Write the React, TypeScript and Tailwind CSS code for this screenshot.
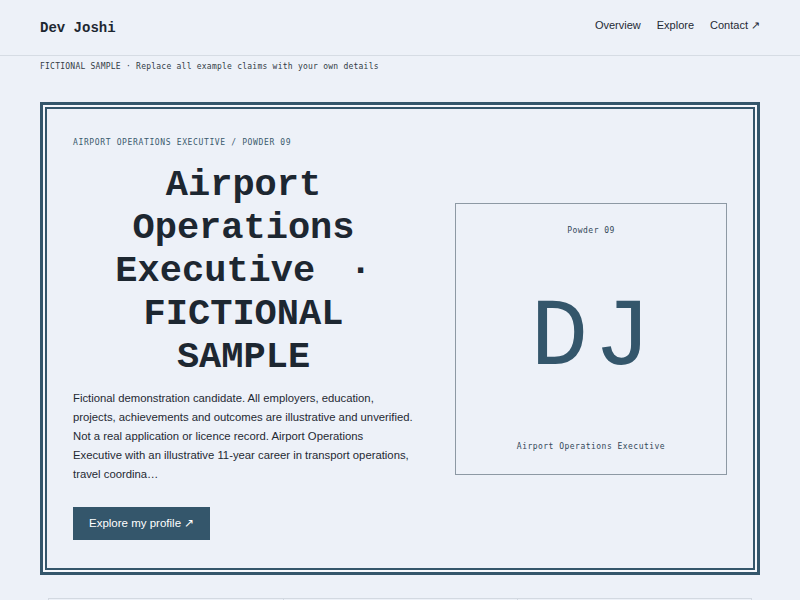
import React from 'react';

const mono = { fontFamily: '"DejaVu Sans Mono", "Liberation Mono", monospace' };
const courier = { fontFamily: '"Courier New", "Liberation Mono", monospace' };
const sans = { fontFamily: '"Liberation Sans", Arial, sans-serif' };

const NAV = ['Overview', 'Explore', 'Contact ↗'];

function Header() {
  return (
    <header className="h-[56px] border-b border-[#d6dce4] px-10 flex items-center justify-between">
      <div className="text-[14px] font-bold text-[#1d2731] mt-[2px]" style={courier}>
        Dev Joshi
      </div>
      <nav className="flex items-center gap-4 text-[11px] text-[#1f2a35] -mt-[5px]" style={sans}>
        {NAV.map((n) => (
          <a key={n} href="#" className="hover:underline">
            {n}
          </a>
        ))}
      </nav>
    </header>
  );
}

function MonogramCard() {
  return (
    <div className="w-[272px] h-[272px] border border-[#8d99a4] flex flex-col items-center justify-between py-[21px]">
      <div className="text-[8px] leading-[12px] tracking-[0.06em] text-[#34495a]" style={mono}>
        Powder 09
      </div>
      <div className="text-[96px] leading-none tracking-[0.06em] pl-[0.06em] text-[#34566b]" style={courier}>
        DJ
      </div>
      <div className="text-[8px] leading-[12px] tracking-[0.06em] text-[#34495a]" style={mono}>
        Airport Operations Executive
      </div>
    </div>
  );
}

function Hero() {
  return (
    <section className="mx-10 mt-[29px] border-[3px] border-[#34566b] p-[2px] bg-[#f6f8fc]">
      <div className="border-2 border-[#34566b] bg-[#edf1f8] px-[26px] pt-[28px] pb-[28px] grid grid-cols-[1fr_272px] gap-[41px] items-center">
        <div>
          <div className="text-[8px] leading-[12px] tracking-[0.08em] text-[#3b5b6e]" style={mono}>
            AIRPORT OPERATIONS EXECUTIVE / POWDER 09
          </div>
          <h1
            className="mt-[15px] text-center text-[37px] leading-[43px] font-bold text-[#1d2731]"
            style={courier}
          >
            Airport Operations Executive <span className="ml-[12px]">·</span> FICTIONAL SAMPLE
          </h1>
          <p className="mt-[10px] text-[11.3px] leading-[19px] text-[#1f2933]" style={sans}>
            Fictional demonstration candidate. All employers, education, projects, achievements and
            outcomes are illustrative and unverified. Not a real application or licence record.
            Airport Operations Executive with an illustrative 11-year career in transport operations,
            travel coordina…
          </p>
          <a
            href="#"
            className="mt-[23px] inline-flex h-[33px] items-center px-4 bg-[#34566b] text-white text-[11.5px]"
            style={sans}
          >
            Explore my profile ↗
          </a>
        </div>
        <MonogramCard />
      </div>
    </section>
  );
}

function Cards() {
  return (
    <section className="mx-12 mt-[23px] grid grid-cols-3 border-t border-[#d3d9e1]">
      {['Experience', 'Skills', 'Contact'].map((t, i) => (
        <div key={t} className={`h-[140px] border-[#d3d9e1] border-l ${i === 2 ? 'border-r' : ''}`} />
      ))}
    </section>
  );
}

export default function App() {
  return (
    <div className="min-h-screen bg-[#edf1f8] pb-10">
      <Header />
      <div className="px-10 pt-[5px] text-[8px] leading-[12px] tracking-[0.03em] text-[#333c46]" style={mono}>
        FICTIONAL SAMPLE · Replace all example claims with your own details
      </div>
      <Hero />
      <Cards />
    </div>
  );
}
